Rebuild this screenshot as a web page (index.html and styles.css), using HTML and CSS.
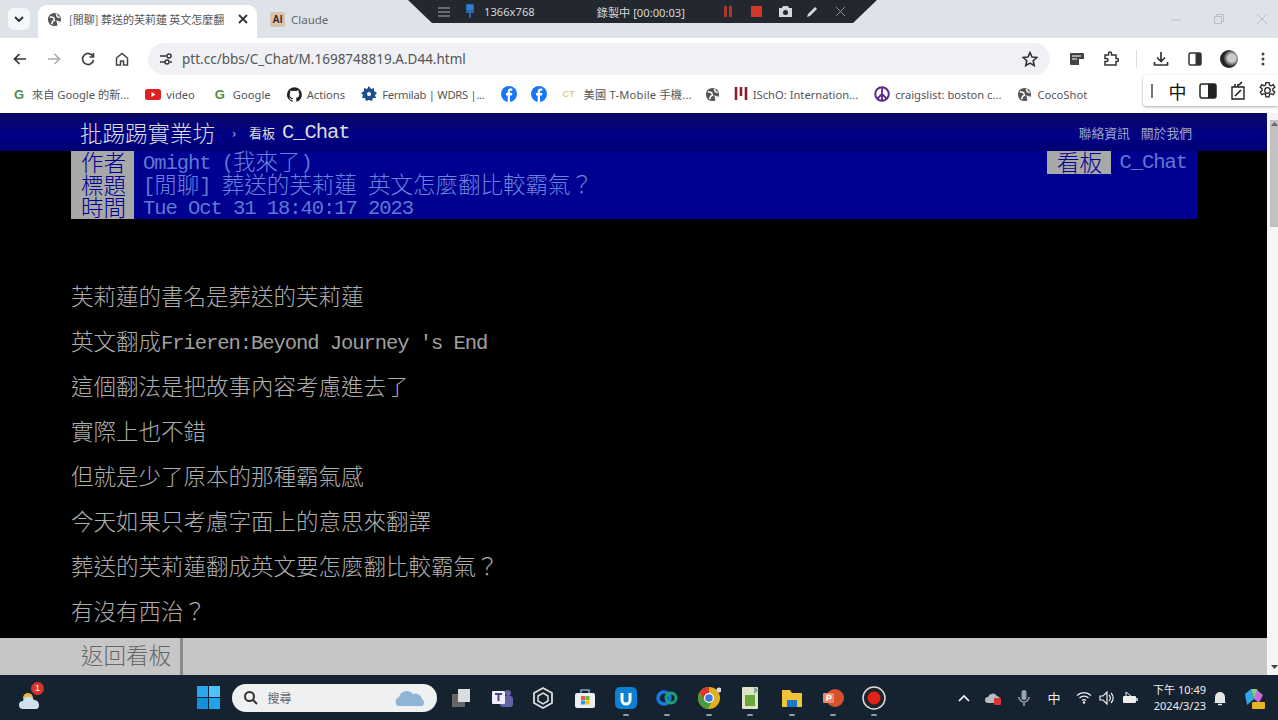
FILE: index.html
```html
<!DOCTYPE html>
<html lang="zh-Hant">
<head>
<meta charset="utf-8">
<title>PTT</title>
<link rel="stylesheet" href="styles.css">
</head>
<body>
<div class="screen">
  <header class="chrome">
    <div class="tabstrip">
      <span class="tab-search"><svg width="10" height="6" viewBox="0 0 10 6"><path d="M1 1l4 4 4-4" fill="none" stroke="#333" stroke-width="2"/></svg></span>
      <div class="tab active">
        <svg class="globe" width="15" height="15" viewBox="0 0 16 16"><circle cx="8" cy="8" r="7" fill="#555"/><path d="M3 5l4 1 1 3-2 1-1 3M10 2l1 3 3 1M11 10l3 1-2 3z" fill="none" stroke="#fff" stroke-width="1.6"/></svg>
        <span class="tab-title">[閒聊] 葬送的芙莉蓮 英文怎麼翻</span>
        <svg width="10" height="10" viewBox="0 0 10 10"><path d="M1 1l8 8M9 1l-8 8" stroke="#333" stroke-width="1.8"/></svg>
      </div>
      <div class="tab idle">
        <span class="claude-ico">AI</span>
        <span class="tab-title">Claude</span>
      </div>
      <div class="win-ctrls">
        <svg width="12" height="12" viewBox="0 0 12 12"><path d="M1 7h10" stroke="#b9bec5"/></svg>
        <svg width="12" height="12" viewBox="0 0 12 12"><path d="M1.5 3.500h7v7h-7zM3.500 3V1.500h7v7H9" fill="none" stroke="#b9bec5"/></svg>
        <svg width="12" height="12" viewBox="0 0 12 12"><path d="M1 1l10 10M11 1L1 11" stroke="#b9bec5"/></svg>
      </div>
    </div>
    <div class="toolbar">
      <svg class="nav-ico" width="14" height="12" viewBox="0 0 14 12"><path d="M13 6H2M6.500 1L1.500 6l5 5" fill="none" stroke="#333" stroke-width="1.700"/></svg>
      <svg class="nav-ico" width="14" height="12" viewBox="0 0 14 12"><path d="M1 6h11M7.500 1l5 5-5 5" fill="none" stroke="#aaa" stroke-width="1.500"/></svg>
      <svg class="nav-ico" width="14" height="14" viewBox="0 0 14 14"><path d="M12 4.500A5.500 5.500 0 1 0 12.500 8M12.500 1v4h-4" fill="none" stroke="#444" stroke-width="1.700"/></svg>
      <svg class="nav-ico" width="14" height="14" viewBox="0 0 14 14"><path d="M1.500 6L7 1.500 12.500 6v7h-4V9h-3v4h-4z" fill="none" stroke="#444" stroke-width="1.500"/></svg>
      <div class="omnibox">
        <svg width="14" height="12" viewBox="0 0 14 12"><path d="M1 3h6M11 9h2M1 9h5" stroke="#333" stroke-width="1.500"/><circle cx="10" cy="3" r="2" fill="none" stroke="#333" stroke-width="1.500"/><circle cx="8" cy="9" r="2" fill="none" stroke="#333" stroke-width="1.500"/></svg>
        <span class="url">ptt.cc/bbs/C_Chat/M.1698748819.A.D44.html</span>
        <svg class="star" width="16" height="16" viewBox="0 0 16 16"><path d="M8 1.500l2 4.500 4.800.5-3.600 3.200 1 4.800L8 12.100l-4.200 2.400 1-4.800L1.200 6.500 6 6z" fill="none" stroke="#333" stroke-width="1.600"/></svg>
      </div>
      <div class="tool-icons">
        <svg width="16" height="14" viewBox="0 0 16 14"><path d="M1 2a1 1 0 0 1 1-1h12a1 1 0 0 1 1 1v5h-5v6H2a1 1 0 0 1-1-1z" fill="#444"/><path d="M3 4h9M3 7h5" stroke="#fff" stroke-width="1.200"/></svg>
        <svg width="16" height="16" viewBox="0 0 16 16"><path d="M2 4h3.500V2.500a1.500 1.500 0 0 1 3 0V4H13v3.500h1a1.500 1.500 0 0 1 0 3h-1V14H2v-3.500h1.500a1.500 1.500 0 0 0 0-3H2z" fill="none" stroke="#333" stroke-width="1.500"/></svg>
        <span class="tool-sep"></span>
        <svg width="16" height="16" viewBox="0 0 16 16"><path d="M8 1v9M4 6.500L8 10.500l4-4M1.500 11v3h13v-3" fill="none" stroke="#333" stroke-width="1.700"/></svg>
        <svg class="panel-ico" width="14" height="14" viewBox="0 0 14 14"><rect x="1" y="1" width="12" height="12" rx="1.500" fill="none" stroke="#333" stroke-width="1.500"/><rect x="7.500" y="1" width="5.500" height="12" fill="#333"/></svg>
        <span class="avatar"></span>
        <svg class="kebab" width="4" height="14" viewBox="0 0 4 14"><circle cx="2" cy="2" r="1.500" fill="#444"/><circle cx="2" cy="7" r="1.500" fill="#444"/><circle cx="2" cy="12" r="1.500" fill="#444"/></svg>
      </div>
    </div>
    <nav class="bookmarks">
      <span class="bm"><span class="g-ico">G</span>來自 Google 的新...</span>
      <span class="bm bm-video"><svg width="16" height="11" viewBox="0 0 16 11"><rect width="16" height="11" rx="2.500" fill="#e02020"/><path d="M6.500 3v5l4-2.500z" fill="#fff"/></svg>video</span>
      <span class="bm"><span class="g-ico">G</span>Google</span>
      <span class="bm"><svg width="15" height="15" viewBox="0 0 16 16"><path fill="#222" d="M8 .2a8 8 0 0 0-2.500 15.600c.4.100.5-.2.500-.4v-1.400c-2.200.5-2.700-1-2.700-1-.4-.9-.9-1.200-.9-1.200-.7-.5.100-.5.100-.5.800.1 1.200.8 1.200.8.700 1.200 1.900.9 2.300.7.100-.5.300-.9.500-1.100-1.800-.2-3.600-.9-3.600-4 0-.9.300-1.600.8-2.100-.1-.2-.4-1 .1-2.100 0 0 .7-.2 2.200.8a7.600 7.600 0 0 1 4 0c1.500-1 2.200-.8 2.200-.8.400 1.100.2 1.900.1 2.100.5.600.8 1.300.8 2.100 0 3.100-1.900 3.700-3.700 3.900.3.300.6.800.6 1.500v2.200c0 .2.100.5.600.4A8 8 0 0 0 8 .2z"/></svg>Actions</span>
      <span class="bm bm-fermi"><svg width="16" height="16" viewBox="0 0 16 16"><path d="M8 0l2 3 3-1 0 3 3 2-2 2 1 3-3 0-1 3-3-1-3 1-1-3-3 0 1-3-2-2 3-2 0-3 3 1z" fill="#1d4f91"/><circle cx="8" cy="8" r="2" fill="#fff"/></svg>Fermilab | WDRS |...</span>
      <svg class="fb" width="16" height="16" viewBox="0 0 16 16"><circle cx="8" cy="8" r="8" fill="#1877f2"/><path d="M9 16V9.500h2l.4-2.400H9V6c0-.8.300-1.200 1.300-1.200h1V2.700c-2.800-.6-4.600.2-4.600 3v1.400H5v2.400h1.700V16z" fill="#fff"/></svg>
      <svg class="fb fb-last" width="16" height="16" viewBox="0 0 16 16"><circle cx="8" cy="8" r="8" fill="#1877f2"/><path d="M9 16V9.500h2l.4-2.400H9V6c0-.8.300-1.200 1.300-1.200h1V2.700c-2.800-.6-4.600.2-4.600 3v1.400H5v2.400h1.700V16z" fill="#fff"/></svg>
      <span class="bm bm-ct"><span class="ct-ico">CT</span>美國 T-Mobile 手機...</span>
      <svg class="globe" width="15" height="15" viewBox="0 0 16 16"><circle cx="8" cy="8" r="7" fill="#555"/><path d="M3 5l4 1 1 3-2 1-1 3M10 2l1 3 3 1M11 10l3 1-2 3z" fill="none" stroke="#fff" stroke-width="1.600"/></svg>
      <span class="bm"><svg width="14" height="16" viewBox="0 0 14 16"><path d="M2 1v13M7 1v9M12 1v13" stroke="#8a1c2c" stroke-width="2.600"/></svg>ISchO: Internation...</span>
      <span class="bm"><svg width="16" height="16" viewBox="0 0 16 16"><circle cx="8" cy="8" r="6.800" fill="none" stroke="#5b2a86" stroke-width="2"/><path d="M8 1v14M8 8l-5 5M8 8l5 5" stroke="#5b2a86" stroke-width="1.800"/></svg>craigslist: boston c...</span>
      <span class="bm"><svg width="15" height="15" viewBox="0 0 16 16"><circle cx="8" cy="8" r="7" fill="#555"/><path d="M3 5l4 1 1 3-2 1-1 3M10 2l1 3 3 1M11 10l3 1-2 3z" fill="none" stroke="#fff" stroke-width="1.600"/></svg>CocoShot</span>
    </nav>
  </header>

  <main class="browser-page">
    <div class="page-col">
      <div class="topbar">
        <span class="brand">批踢踢實業坊</span>
        <span class="crumb-sep">›</span>
        <span class="crumb-small">看板</span>
        <span class="crumb-board">C_Chat</span>
        <span class="top-links"><span>聯絡資訊</span><span>關於我們</span></span>
      </div>
      <div class="article">
        <div class="meta">
          <div class="meta-row">
            <span class="tag">作者</span><span class="val"><span class="l">Omight (</span>我來了<span class="l">)</span></span>
            <span class="board-tag">看板</span><span class="board-val l">C_Chat</span>
          </div>
          <div class="meta-row"><span class="tag">標題</span><span class="val"><span class="l">[</span>閒聊<span class="l">] </span>葬送的芙莉蓮<span class="l"> </span>英文怎麼翻比較霸氣？</span></div>
          <div class="meta-row"><span class="tag">時間</span><span class="val"><span class="l">Tue Oct 31 18:40:17 2023</span></span></div>
        </div>
        <div class="body-text">
          <p>芙莉蓮的書名是葬送的芙莉蓮</p>
          <p>英文翻成<span class="l">Frieren:Beyond Journey 's End</span></p>
          <p>這個翻法是把故事內容考慮進去了</p>
          <p>實際上也不錯</p>
          <p>但就是少了原本的那種霸氣感</p>
          <p>今天如果只考慮字面上的意思來翻譯</p>
          <p>葬送的芙莉蓮翻成英文要怎麼翻比較霸氣？</p>
          <p>有沒有西治？</p>
        </div>
      </div>
      <div class="backbar"><span class="back">返回看板</span></div>
    </div>
    <div class="scrollbar">
      <span class="sb-thumb"><svg width="7" height="4" viewBox="0 0 7 4"><path d="M3.500 0L7 4H0z" fill="#666"/></svg></span>
      <svg class="sb-down" width="7" height="4" viewBox="0 0 7 4"><path d="M0 0h7L3.500 4z" fill="#444"/></svg>
    </div>
  </main>

  <footer class="taskbar">
    <div class="tb-left">
      <svg width="28" height="26" viewBox="0 0 28 26"><circle cx="11" cy="13" r="5" fill="#e8b64c"/><path d="M6 24a4 4 0 0 1 0-8 6 6 0 0 1 11-1 5 5 0 0 1 3 9z" fill="#cfe0ee"/></svg>
      <span class="tb-badge">1</span>
    </div>
    <div class="tb-center">
      <svg width="23" height="23" viewBox="0 0 23 23"><rect width="11" height="11" fill="#28a8ea"/><rect x="12" width="11" height="11" fill="#4cc2ff"/><rect y="12" width="11" height="11" fill="#0f8fdc"/><rect x="12" y="12" width="11" height="11" fill="#1fa3ea"/></svg>
      <div class="searchbox">
        <svg width="15" height="15" viewBox="0 0 15 15"><circle cx="6.500" cy="6.500" r="4.500" fill="none" stroke="#333" stroke-width="2"/><path d="M10 10l4 4" stroke="#333" stroke-width="2"/></svg>
        <span class="search-label">搜尋</span>
        <svg class="cloud" width="34" height="18" viewBox="0 0 34 18"><path d="M5 17a5 5 0 0 1 1-9 8 8 0 0 1 14-3 7 7 0 0 1 9 5 4 4 0 0 1 0 7z" fill="#8fb5d6"/></svg>
      </div>
      <div class="apps">
        <svg width="24" height="24" viewBox="0 0 24 24"><rect x="3" y="8" width="13" height="13" fill="#666"/><rect x="9" y="3" width="12" height="13" fill="#ddd"/></svg>
        <svg width="24" height="24" viewBox="0 0 24 24"><circle cx="18" cy="7" r="3" fill="#6264a7"/><rect x="10" y="10" width="13" height="11" rx="3" fill="#6264a7"/><rect x="2" y="5" width="13" height="13" rx="1" fill="#eef"/><path d="M5 8h7M8.500 8v7" stroke="#464775" stroke-width="2"/></svg>
        <svg width="24" height="24" viewBox="0 0 24 24"><path d="M12 2l9 5v10l-9 5-9-5V7z" fill="none" stroke="#ddd" stroke-width="1.800"/><path d="M12 7l5 3v5l-5 3-5-3v-5z" fill="none" stroke="#ddd" stroke-width="1.500"/></svg>
        <svg width="24" height="24" viewBox="0 0 24 24"><path d="M8 7V4h8v3" fill="none" stroke="#7ac" stroke-width="1.500"/><rect x="2" y="7" width="20" height="15" rx="2" fill="#eee"/><rect x="8" y="10" width="4" height="4" fill="#e55"/><rect x="12.500" y="10" width="4" height="4" fill="#6b3"/><rect x="8" y="14.500" width="4" height="4" fill="#29d"/><rect x="12.500" y="14.500" width="4" height="4" fill="#fb0"/></svg>
        <span class="app"><svg width="24" height="24" viewBox="0 0 24 24"><rect x="1" y="1" width="22" height="22" rx="5" fill="#0a7fd4"/><path d="M8 7v7a4 4 0 0 0 8 0V7" fill="none" stroke="#fff" stroke-width="3"/></svg><i></i></span>
        <span class="app"><svg width="24" height="24" viewBox="0 0 24 24"><rect x="1" y="3" width="22" height="18" rx="5" fill="#10243c"/><circle cx="9" cy="12" r="6" fill="none" stroke="#1a78d6" stroke-width="3.500"/><circle cx="16" cy="12" r="5" fill="none" stroke="#20a070" stroke-width="3"/></svg><i></i></span>
        <span class="app"><svg width="24" height="24" viewBox="0 0 24 24"><circle cx="12" cy="12" r="11" fill="#e0b020"/><path d="M12 1a11 11 0 0 0-9.500 5.500L8 15h4z" fill="#d8392b"/><path d="M2.500 6.500A11 11 0 0 0 11 23l4-8H8z" fill="#4a9b3f"/><circle cx="12" cy="12" r="5" fill="#fff"/><circle cx="12" cy="12" r="3.800" fill="#3c78d8"/><circle cx="22" cy="4" r="2.500" fill="#ddd"/></svg><i></i></span>
        <span class="app"><svg width="24" height="24" viewBox="0 0 24 24"><rect x="4" y="1" width="16" height="22" rx="1" fill="#dfe6c8"/><rect x="7" y="9" width="10" height="11" fill="#6aa83a"/><path d="M16 1l5 3-5 4z" fill="#8a9"/></svg><i></i></span>
        <span class="app"><svg width="24" height="24" viewBox="0 0 24 24"><path d="M2 4h8l2 3h10v14H2z" fill="#f3c13a"/><rect x="7" y="14" width="10" height="7" fill="#1679c9"/></svg><i></i></span>
        <span class="app"><svg width="24" height="24" viewBox="0 0 24 24"><circle cx="14" cy="12" r="9" fill="#d9512c"/><rect x="2" y="7" width="11" height="10" rx="1" fill="#e98a6c"/><path d="M6 15V9.500h2.500a1.500 1.500 0 0 1 0 3H6" fill="none" stroke="#fff" stroke-width="1.400"/></svg><i></i></span>
        <span class="app"><svg width="24" height="24" viewBox="0 0 24 24"><circle cx="12" cy="12" r="11" fill="#20242a" stroke="#ddd" stroke-width="1.500"/><circle cx="12" cy="12" r="6.500" fill="#e2231a"/></svg><i></i></span>
      </div>
    </div>
    <div class="tray">
      <span class="slot"><svg width="12" height="8" viewBox="0 0 12 8"><path d="M1 7l5-5 5 5" fill="none" stroke="#fff" stroke-width="1.600"/></svg></span>
      <span class="slot"><svg width="18" height="16" viewBox="0 0 18 16"><path d="M3 13a3 3 0 0 1 0-6 5 5 0 0 1 9-1 4 4 0 0 1 2 7z" fill="#bbb"/><rect x="9" y="8" width="7" height="7" rx="1" fill="#d33"/></svg></span>
      <span class="slot"><svg width="14" height="18" viewBox="0 0 14 18"><rect x="4.500" y="1" width="5" height="10" rx="2.500" fill="#9aa3ab"/><path d="M2 8a5 5 0 0 0 10 0M7 13v4" fill="none" stroke="#9aa3ab" stroke-width="1.500"/></svg></span>
      <span class="slot ime">中</span>
      <span class="slot"><svg width="16" height="13" viewBox="0 0 16 13"><path d="M1 4.500a10 10 0 0 1 14 0M3.500 7a6.500 6.500 0 0 1 9 0M6 9.500a3 3 0 0 1 4 0" fill="none" stroke="#eee" stroke-width="1.300"/><circle cx="8" cy="11.500" r="1.200" fill="#eee"/></svg></span>
      <span class="slot vol"><svg width="16" height="14" viewBox="0 0 16 14"><path d="M1 5h3l4-4v12l-4-4H1z" fill="none" stroke="#eee" stroke-width="1.200"/><path d="M10 4a4 4 0 0 1 0 6M12 2a7 7 0 0 1 0 10" fill="none" stroke="#eee" stroke-width="1.200"/></svg></span>
      <span class="slot"><svg width="17" height="14" viewBox="0 0 17 14"><rect x="1" y="5" width="13" height="7" rx="1" fill="#eee"/><path d="M15 7v3" stroke="#eee" stroke-width="1.500"/><path d="M4 5V1l5 4" fill="none" stroke="#eee"/></svg></span>
      <div class="clock"><span>下午 10:49</span><span>2024/3/23</span></div>
      <span class="slot bell"><svg width="14" height="16" viewBox="0 0 14 16"><path d="M2 12V7a5 5 0 0 1 10 0v5l1 1H1z" fill="#e6e6e6"/><path d="M5 14.500h4" stroke="#e6e6e6" stroke-width="1.500"/></svg></span>
      <span class="slot copilot"><svg width="22" height="22" viewBox="0 0 22 22"><path d="M2 7l6-5 3 10-7 6z" fill="#2fa7e8"/><path d="M8 2h6l2 7-5 3z" fill="#7ed08b"/><path d="M14 3l6 5-4 8-5-4z" fill="#c86ad8"/><rect x="9" y="15" width="13" height="7" rx="1" fill="#e6b422"/></svg></span>
    </div>
  </footer>

  <div class="recorder">
    <svg width="12" height="10" viewBox="0 0 12 10"><path d="M0 1h12M0 5h12M0 9h12" stroke="#a8adb3"/></svg>
    <svg class="rec-pin" width="8" height="15" viewBox="0 0 8 15"><path d="M1 1h6v5H1zM0 8h8M4 8v6" stroke="#2f7fd0" stroke-width="1.500" fill="#2f7fd0"/></svg>
    <span class="rec-size">1366x768</span>
    <span class="rec-time">錄製中 [00:00:03]</span>
    <span class="rec-pause"></span>
    <span class="rec-stop"></span>
    <svg class="rec-cam" width="15" height="13" viewBox="0 0 15 13"><path d="M1 3h3l1-2h5l1 2h3v9H1z" fill="#d5d8da"/><circle cx="7.500" cy="7.500" r="2.500" fill="#22282e"/></svg>
    <svg class="rec-pen" width="13" height="13" viewBox="0 0 13 13"><path d="M1 12l1-3 7-7 2 2-7 7z" fill="#d5d8da"/></svg>
    <svg class="rec-x" width="11" height="11" viewBox="0 0 11 11"><path d="M1 1l9 9M10 1l-9 9" stroke="#8b9096"/></svg>
  </div>

  <div class="ext-popup">
    <span class="grip"></span>
    <span class="ext-zh">中</span>
    <svg width="18" height="16" viewBox="0 0 18 16"><rect x="1" y="1" width="16" height="14" rx="2" fill="none" stroke="#222" stroke-width="1.500"/><rect x="9" y="1" width="8" height="14" fill="#222"/></svg>
    <svg width="16" height="19" viewBox="0 0 16 19"><path d="M2 6h12v12H2z" fill="none" stroke="#222" stroke-width="1.400"/><path d="M5 15l6-6M9 4l3-3M5 6V3M8 6V3" stroke="#222" stroke-width="1.600"/></svg>
    <svg width="19" height="19" viewBox="0 0 24 24"><path d="M12 8.500a3.500 3.500 0 1 0 0 7 3.500 3.500 0 0 0 0-7zM10 2h4l.5 3 2 1 2.700-1.400 2 3.400-2.400 1.900v2.200l2.400 1.900-2 3.400-2.700-1.400-2 1-.5 3h-4l-.5-3-2-1-2.700 1.400-2-3.400 2.400-1.900V9.900L2.800 8l2-3.400L7.500 6l2-1z" fill="none" stroke="#222" stroke-width="1.600"/></svg>
  </div>
</div>
</body>
</html>
```
FILE: styles.css
```css
* { box-sizing: border-box; }
html, body { margin: 0; padding: 0; height: 100%; overflow: hidden; background: #000; }
.screen {
  position: relative;
  width: 1278px;
  height: 720px;
  display: flex;
  flex-direction: column;
  overflow: hidden;
  font-family: "Noto Sans CJK TC", "Noto Sans", sans-serif;
}
svg { display: block; flex: none; }

/* browser chrome */
.chrome { flex: none; height: 113px; background: #fff; display: flex; flex-direction: column; }
.tabstrip { height: 38px; background: #dee3ea; display: flex; align-items: center; padding: 5px 0 0 8px; }
.tab-search { width: 22px; height: 22px; background: #f4f6f9; border-radius: 6px; display: flex; align-items: center; justify-content: center; margin-top: -5px; }
.tab { height: 33px; padding-bottom: 5px; display: flex; align-items: center; font-size: 11.5px; color: #555; }
.tab.active { width: 219px; margin-left: 8px; padding-left: 9px; padding-right: 9px; background: #fff; border-radius: 9px 9px 0 0; gap: 7px; }
.tab.active .tab-title { flex: 1; overflow: hidden; white-space: nowrap; color: #555; font-size: 11px; }
.tab.idle { margin-left: 13px; gap: 6px; color: #666; font-family: "Noto Sans", sans-serif; }
.claude-ico { width: 15px; height: 15px; background: #d9c3ad; color: #3a2a1a; font-size: 10px; font-weight: 700; line-height: 15px; text-align: center; border-radius: 2px; font-family: "Liberation Sans", sans-serif; }
.win-ctrls { margin-left: auto; display: flex; gap: 31px; padding-right: 10px; margin-top: -5px; }
.toolbar { height: 37px; display: flex; align-items: center; padding: 0 0 0 13px; }
.nav-ico { margin: 5px 20px 0 0; }
.omnibox { width: 902px; height: 32px; margin: 5px 0 0 -1px; background: #eff1f5; border-radius: 16px; display: flex; align-items: center; padding: 0 12px 0 11px; }
.url { margin-left: 9px; flex: 1; font: 13.500px "Noto Sans", sans-serif; color: #555; }
.tool-icons { display: flex; align-items: center; margin: 5px 0 0 19px; gap: 18px; }
.tool-sep { width: 1px; height: 18px; background: #ddd; margin: 0 -1.500px; }
.panel-ico { margin-left: 1px; }
.kebab { margin-left: 5px; }
.avatar { width: 18px; height: 18px; border-radius: 50%; background: radial-gradient(circle at 65% 45%, #ccc 0 25%, #222 55%); }
.bookmarks { height: 38px; display: flex; align-items: center; padding: 0 0 0 14px; font-size: 11.200px; color: #555; font-family: "Noto Sans", "Noto Sans CJK TC", sans-serif; white-space: nowrap; }
.bm { display: flex; align-items: center; gap: 5px; margin-right: 16px; }
.bm-video { margin-right: 20px; }
.bm-fermi { letter-spacing: -0.270px; }
.bm-ct { letter-spacing: 0.200px; margin-right: 13px; }
.fb { margin-right: 14px; }
.fb-last { margin-right: 16px; }
.bookmarks .globe { margin-right: 14px; }
.g-ico { font: 700 13px "Liberation Sans", sans-serif; color: #4a8f48; width: 13px; }
.ct-ico { font: 700 9px "Liberation Sans", sans-serif; color: #e0cf70; width: 16px; }

/* page */
.browser-page { flex: none; height: 562px; display: flex; background: #000; }
.page-col { width: 1267px; flex: none; display: flex; flex-direction: column; }
.topbar { height: 38px; flex: none; display: flex; align-items: center; padding: 0 75px 0 80px; background: linear-gradient(#0a0a62, #000088 60%, #000072); color: #ddd; }
.brand { font-size: 22.500px; line-height: 1; color: #dcdcdc; font-weight: 300; }
.crumb-sep { margin-left: 17px; color: #bbb; font-size: 13px; }
.crumb-small { margin-left: 13px; font-size: 13px; color: #ddd; }
.crumb-board { margin-left: 7px; font: 20.500px "Liberation Mono", monospace; letter-spacing: -1.050px; color: #ddd; }
.top-links { margin-left: auto; display: flex; gap: 11px; font-size: 12.800px; color: #9aa6c4; }

.article { flex: 1; min-height: 0; font-size: 22.500px; line-height: 22.500px; color: #adadad; font-weight: 300; }
.l { font-family: "Liberation Mono", monospace; font-size: 20.500px; letter-spacing: -1.050px; font-weight: 400; vertical-align: 1.500px; }
.meta { margin-left: 71px; width: 1127px; background: #000090; }
.meta-row { height: 22.500px; display: flex; white-space: pre; line-height: 20px; }
.tag { width: 63px; flex: none; padding-left: 10px; background: #a8a8a8; color: #000090; }
.val { margin-left: 9px; color: #6a82dc; white-space: pre; line-height: 18px; }
.val .l { color: #6078d0; }
.board-tag { margin-left: auto; width: 64px; text-align: center; background: #a8a8a8; color: #000090; }
.board-val { margin: 0 11px 0 8px; color: #6078d0; line-height: 24px; }
.body-text { padding: 65.500px 0 0 71px; }
.body-text p { height: 22.500px; margin: 0 0 22.500px; white-space: pre; }
.body-text .l { color: #a0a0a0; }
.backbar { height: 37px; flex: none; background: #c6c6c6; display: flex; align-items: stretch; }
.back { width: 183px; padding-left: 81px; border-right: 3px solid #8a8a8a; font-size: 22.500px; line-height: 33px; color: #666; font-weight: 300; }
.scrollbar { width: 11px; flex: none; background: #f5f5f5; display: flex; flex-direction: column; align-items: flex-end; padding: 7px 0 6px; justify-content: space-between; }
.sb-thumb { width: 8px; height: 107px; background: #c1c1c1; display: flex; justify-content: center; padding-top: 2px; }

/* taskbar */
.taskbar { flex: none; height: 45px; background: #15222f; display: flex; align-items: center; position: relative; color: #eee; }
.tb-left { position: relative; margin-left: 17px; width: 28px; }
.tb-badge { position: absolute; left: 14px; top: -3px; width: 13px; height: 13px; border-radius: 50%; background: #d9342b; color: #fff; font: 9px/13px "Liberation Sans", sans-serif; text-align: center; }
.tb-center { display: flex; align-items: center; margin-left: 151.500px; }
.searchbox { width: 205px; height: 28px; margin-left: 12px; border-radius: 14px; background: #eef0f2; display: flex; align-items: center; padding: 0 10px 0 11px; }
.search-label { margin-left: 10px; flex: 1; font-size: 12px; color: #666; }
.apps { display: flex; align-items: center; gap: 17.400px; margin-left: 12px; }
.app { position: relative; display: block; }
.app i { position: absolute; left: 9px; bottom: -6px; width: 6px; height: 2px; background: #8e9aa5; border-radius: 1px; }
.tray { margin-left: auto; padding-right: 4px; display: flex; align-items: center; }
.slot { width: 30px; display: flex; justify-content: center; align-items: center; }
.slot.vol { width: 16px; }
.slot.bell { width: 28px; }
.slot.copilot { width: 40px; }
.ime { font-size: 13px; color: #eee; }
.clock { width: 53px; margin-left: 8px; display: flex; flex-direction: column; align-items: flex-end; font-size: 11px; line-height: 16px; color: #eee; font-family: "Noto Sans", "Noto Sans CJK TC", sans-serif; white-space: nowrap; }

/* overlays */
.recorder {
  position: absolute; left: 408px; top: 0; width: 469px; height: 23px;
  background: #22282e;
  clip-path: polygon(0 0, 100% 0, 445px 100%, 24px 100%);
  display: flex; align-items: center; padding: 0 0 0 30px; color: #d5d8da;
  font: 11.200px "Noto Sans", "Noto Sans CJK TC", sans-serif;
}
.rec-pin { margin-left: 16px; }
.rec-size { margin-left: 10px; }
.rec-time { margin-left: 62px; }
.rec-pause { margin-left: 39px; width: 8px; height: 11px; border-left: 3px solid #a63a2a; border-right: 3px solid #a63a2a; }
.rec-stop { margin-left: 19px; width: 11px; height: 11px; background: #d4362a; }
.rec-cam { margin-left: 16px; }
.rec-pen { margin-left: 13px; }
.rec-x { margin-left: 16px; }
.ext-popup {
  position: absolute; left: 1143px; top: 75px; width: 135px; height: 31px;
  background: #fff; border-radius: 4px 0 0 4px; box-shadow: 0 1px 3px rgba(0,0,0,.35);
  display: flex; align-items: center; padding-left: 8px; gap: 12.500px;
  overflow: hidden;
}
.grip { width: 2px; height: 14px; background: #777; margin-right: 3px; }
.ext-zh { font-size: 18px; line-height: 1; color: #111; }
```
